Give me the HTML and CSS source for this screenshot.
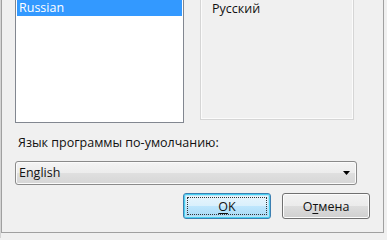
FILE: index.html
```html
<!DOCTYPE html>
<html lang="ru">
<head>
<meta charset="utf-8">
<link rel="stylesheet" href="styles.css">
</head>
<body>
<div class="dialog">
  <div class="top">
    <div class="listbox">
      <div class="item selected">Russian</div>
    </div>
    <div class="panel"><span class="native">Русский</span></div>
  </div>
  <div class="label">Язык программы по-умолчанию:</div>
  <div class="combo">
    <span class="combo-text">English</span>
    <svg class="arrow" width="7" height="4" viewBox="0 0 7 4"><path d="M0 0H7L3.5 4Z" fill="#000"/></svg>
  </div>
  <div class="buttons">
    <button class="btn default"><span class="focus"><u>O</u>K</span></button>
    <button class="btn">О<u>т</u>мена</button>
  </div>
</div>
</body>
</html>
```
FILE: styles.css
```css
html, body {
  margin: 0;
  padding: 0;
  height: 238px;
  overflow: hidden;
  background: #f0f0f0;
}
body {
  font-family: "Open Sans", "Noto Sans", sans-serif;
  font-size: 12.5px;
  color: #111;
  box-shadow: inset 1px 0 0 #d4d4d4;
}
.dialog {
  margin: -16px 0 0 1px;
  width: 355px;
  padding: 0 13px 13px 13px;
  border: 1px solid #a0a0a0;
  border-top: none;
  background: #f0f0f0;
}
.top {
  display: flex;
  align-items: flex-start;
  gap: 16px;
}
.listbox {
  width: 169px;
  height: 139px;
  box-sizing: border-box;
  border: 1px solid #828790;
  background: #fff;
  padding: 15px 1px 0 1px;
}
.item {
  height: 16px;
  line-height: 16px;
  padding-left: 2px;
}
.item.selected {
  background: #3399ff;
  color: #fff;
}
.panel {
  border: 1px solid #d5d5d5;
  box-shadow: inset 1px 1px 0 #fbfbfb, inset -1px -1px 0 #fbfbfb;
  padding: 16px 0 0 11px;
  box-sizing: border-box;
  width: 154px;
  height: 136px;
  line-height: 16px;
}
.label {
  margin-top: 12px;
  line-height: 16px;
  padding-left: 3px;
}
.combo {
  margin-top: 10px;
  width: 342px;
  height: 24px;
  box-sizing: border-box;
  border: 1px solid #8a8a8a;
  border-radius: 3px;
  background: linear-gradient(#f4f4f4 0%, #ececec 50%, #dfdfdf 51%, #d6d6d6 100%);
  box-shadow: inset 0 0 0 1px #fbfbfb;
  display: flex;
  align-items: center;
  justify-content: space-between;
  padding: 0 6px 0 3px;
}
.combo-text {
  line-height: 16px;
}
.arrow {
  display: block;
}
.buttons {
  margin-top: 8px;
  display: flex;
  justify-content: flex-end;
  gap: 11px;
}
.btn {
  width: 88px;
  height: 26px;
  border: 1px solid #707070;
  border-radius: 3px;
  background: linear-gradient(#f2f2f2 0%, #ebebeb 50%, #dddddd 51%, #cfcfcf 100%);
  box-shadow: inset 0 0 0 1px #fcfcfc;
  font: inherit;
  color: #111;
  padding: 0;
  display: flex;
  align-items: center;
  justify-content: center;
}
.btn.default {
  border-color: #3c7fb1;
  background: linear-gradient(#eaf6fd 0%, #d9f0fc 50%, #bee6fd 51%, #a7d9f5 100%);
  box-shadow: inset 0 0 0 1px #48d0f0, inset 0 0 0 2px #b8e4f8;
  padding: 3px;
}
.focus {
  flex: 1;
  align-self: stretch;
  display: flex;
  align-items: center;
  justify-content: center;
  outline: 1px dotted #333;
  outline-offset: -1px;
}
u {
  text-decoration: underline;
  text-underline-offset: 2px;
}
```
